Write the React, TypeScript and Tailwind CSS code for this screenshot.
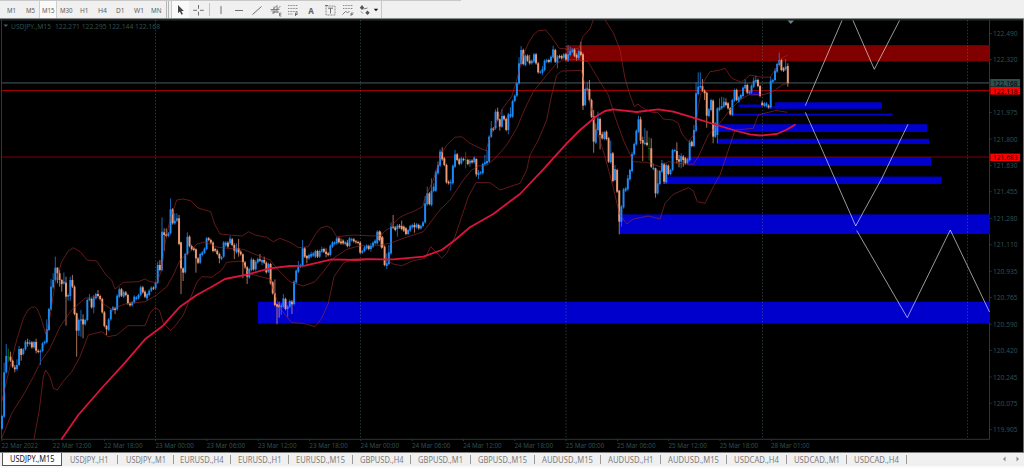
import { Fragment, type ReactNode } from "react";
import clsx from "clsx";

type Bar = [open: number, close: number, high?: number, low?: number];

// Every run of bars starts at its own origin. Values are thirds of a pixel, growing downwards.
type Run = { x: number; y: number; bars: Bar[] };

const STEP = 6.4;

const runs: Run[] = [
  {
    x: 6,
    y: 540,
    bars: [
      [746, 708], [710, 577, 548], [577, 528, 492], [530, 530, 506, 546], [530, 542, 515], [542, 560],
      [562, 568, 555, 577], [567, 555, 538, 572], [555, 507, 498], [507, 525, 504, 542], [522, 508], [508, 485, 480],
      [487, 491, 476, 500], [492, 487, 480], [487, 502], [502, 486], [486, 512, 476, 520], [512, 516],
      [517, 513, 508, 555], [513, 490], [490, 485], [487, 447, 418], [450, 387], [388, 320, 297],
      [322, 300, 280], [300, 263, 230], [263, 280, 262, 310], [280, 300, 270, 320], [300, 312, 297, 335], [310, 305, 278],
      [308, 350, 290, 437], [350, 345, 340, 362], [348, 300, 290, 362], [300, 320, 285], [320, 402], [400, 452, 398, 530],
      [452, 420, 415, 468], [422, 418, 390, 470], [418, 433, 403, 475], [433, 420], [420, 360], [360, 355, 342],
      [357, 382], [382, 352, 345, 400], [355, 342], [342, 348, 330], [348, 357], [357, 397],
      [397, 438], [438, 448, 435, 465], [450, 418], [418, 390, 385], [390, 382], [385, 390, 380, 402],
      [388, 347], [350, 328, 322], [328, 347], [350, 337, 332], [337, 345], [345, 370],
      [370, 376], [376, 367], [367, 350], [357, 352], [355, 345], [345, 322, 317],
      [322, 337], [335, 350], [355, 342, 338, 362], [345, 332], [332, 323], [323, 326],
      [325, 308], [308, 255, 245], [255, 270, 240], [270, 155, 112], [157, 165, 145, 212], [163, 168, 145],
      [168, 160], [160, 88, 55], [88, 130], [130, 122, 100], [122, 115, 100], [115, 192, 105],
    ],
  },
  {
    x: 543,
    y: 540,
    bars: [
      [187, 265, 185, 342], [265, 278, 262, 303], [277, 222], [222, 170, 157], [170, 198], [198, 208], [205, 210],
      [208, 235, 205, 278], [235, 248], [248, 222], [225, 217], [218, 206], [207, 175], [175, 180], [180, 188],
      [188, 213], [207, 212], [212, 222], [222, 235, 218, 250], [237, 232], [230, 187], [196, 188], [188, 200],
      [190, 176, 168], [178, 195], [195, 212, 190, 237], [217, 205, 190], [205, 217, 177, 230], [215, 223],
      [223, 247, 220, 295], [247, 262], [262, 290, 258, 312], [292, 267], [270, 238, 232], [240, 268], [268, 245],
      [247, 237], [238, 242, 222], [247, 240, 238, 255], [240, 248, 230], [248, 277], [275, 252], [252, 310],
      [307, 340], [340, 375, 298], [373, 380, 370, 433], [374, 382, 365, 413], [382, 377, 370, 405], [380, 355, 342],
      [357, 387], [387, 380, 375, 410], [380, 363], [365, 373, 360, 402], [372, 305], [307, 272], [275, 260, 243],
      [260, 255], [258, 205, 180], [205, 230], [228, 235, 225, 250], [235, 225], [230, 222, 215], [227, 220],
      [230, 213], [213, 230], [230, 213], [215, 207, 200], [207, 215], [215, 222, 205, 232], [220, 225], [225, 197],
      [200, 187], [192, 187], [190, 175], [175, 187], [185, 190, 175], [182, 190], [192, 187], [188, 198, 180],
      [198, 175], [181, 177], [178, 184], [184, 187], [186, 189], [188, 218], [218, 213], [213, 202], [205, 197],
      [198, 207], [207, 198, 190, 215], [200, 188], [190, 182], [190, 155], [155, 180], [175, 202],
    ],
  },
  {
    x: 1141,
    y: 60,
    bars: [
      [637, 652], [652, 680], [680, 735], [738, 730, 700, 747], [732, 697, 675], [700, 620, 607], [620, 623, 585],
      [622, 630], [627, 617, 612, 650], [617, 622, 612], [618, 627, 602], [620, 632], [625, 642], [642, 630], [632, 618],
      [622, 615], [615, 622, 608, 638], [622, 613], [615, 625], [625, 618], [618, 607], [607, 550, 528],
      [553, 520, 500], [520, 552], [555, 512, 475], [513, 500, 490], [512, 455], [460, 435, 425], [437, 395, 388],
      [395, 418, 382], [415, 435], [435, 487], [485, 490], [490, 487, 478, 512], [490, 437], [440, 403, 390],
      [403, 420], [418, 432], [430, 415], [417, 420], [419, 419, 395, 445], [420, 432], [430, 422, 417, 440],
      [422, 427], [427, 413], [417, 463, 415, 470], [465, 458, 450, 477], [460, 457], [460, 432], [433, 427, 405],
      [430, 423, 390], [425, 350], [350, 325, 303], [325, 330], [325, 275, 268], [275, 300, 263], [298, 320, 295, 332],
      [320, 288, 268], [288, 298], [297, 330], [330, 283, 278, 343], [290, 282, 262], [290, 243], [243, 227],
      [227, 190], [190, 130, 112], [132, 90, 78], [90, 132], [135, 107], [107, 122], [122, 130, 105], [130, 122],
      [125, 103], [103, 130], [130, 157], [158, 155], [158, 148, 138, 165], [150, 122], [125, 120], [120, 126],
      [125, 110], [112, 88, 77], [90, 125], [128, 110, 105, 145], [108, 112], [108, 115], [113, 103], [103, 120],
      [122, 103, 75], [105, 93, 80], [95, 88], [88, 107], [105, 113, 100, 122], [115, 93], [95, 105, 65],
      [103, 257, 98, 270], [255, 207], [210, 205, 185], [207, 240, 180], [240, 290],
    ],
  },
  {
    x: 1781,
    y: 60,
    bars: [
      [288, 365, 270, 398], [368, 328, 310], [330, 295, 275], [297, 345, 292, 388], [343, 355, 335], [357, 337], [335, 357],
      [355, 425], [427, 400, 362], [400, 483], [480, 447, 435], [450, 515], [512, 605, 510, 643], [605, 560, 555, 620],
      [562, 508], [512, 505], [508, 475, 465], [478, 450], [453, 402, 395], [403, 372], [373, 332], [335, 298, 287],
      [298, 362, 290, 372], [360, 370, 350, 423], [372, 368, 325], [368, 375, 332], [384, 384, 352, 422], [385, 440, 355],
      [447, 443, 430], [445, 520, 443, 533], [520, 490, 450], [492, 453], [455, 430, 420], [432, 485, 428, 492], [487, 435],
      [437, 462], [462, 450], [450, 390], [393, 390], [393, 420, 367, 430], [418, 425, 405, 442], [425, 408, 400, 445],
      [410, 420, 405, 440], [415, 430], [428, 418], [420, 367, 360], [365, 378], [378, 330, 315], [332, 220, 187],
      [222, 200, 157], [202, 198, 157], [198, 212, 177], [212, 220, 208, 240], [218, 287, 215, 323], [288, 268],
      [270, 240], [242, 350, 238, 370], [350, 310], [345, 265, 262, 370], [270, 262, 235], [265, 258, 230],
      [260, 245, 232], [247, 255, 235], [250, 265], [265, 283], [285, 240], [242, 210], [210, 240], [245, 232],
      [235, 225], [228, 203], [205, 195, 178], [195, 218], [220, 215], [217, 197], [200, 182, 172], [185, 180, 167],
      [180, 198], [198, 228], [248, 255, 243], [258, 250], [258, 250], [257, 262], [262, 182, 170], [185, 180],
      [180, 152, 145], [155, 132], [135, 120, 98], [120, 150], [145, 152], [148, 140, 117], [138, 190, 130, 200],
    ],
  },
];

const upperBand =
  "1.7,401.7 10,366.7 16.7,340 23.3,318.3 28,310 31.7,307.3 34.5,307 37.3,309 40.7,317 45.7,334 50,316.7 55,283.3 61.7,261.7 68.3,251 73.3,247.7 80,251.7 87.3,260 96.7,261 106,275 111.7,280 115,289 123.3,282.3 138.3,281.7 145,279 150,281.7 156.7,282.7 161.7,270 165,243.3 170,220 176.7,200 183,199 190.7,200.7 198,208 210.7,211.7 215,225 220,234 230,235 242.3,236 248.3,231.7 255,235 266.7,237.3 273.3,241.7 280,238.3 290,242.3 298.3,247.7 308.3,246.7 315,235 320,228.3 326.7,226 331.7,228.3 336.7,236.7 353.3,235 373.3,236 381.7,235 385,230.7 390,228 395,222 400,217.3 406.7,214 415,210.7 422.7,206.7 425,198 433.3,180 441.7,153.3 446.7,145 455,137.3 461.7,136.7 470,143.3 476.7,146.7 486,150.7 490,136.7 496.7,121.7 503.3,107.3 511.7,96.7 516.7,80 523.3,55 528.3,43.3 533.3,35 538.3,30.7 545.7,30 551.7,37.3 559.3,48.3 571.7,49.3 579,48.3 582.7,36.7 590,29 593.3,20";
const upperBandTail =
  "605,20 613.3,32.7 620,50 625,78.3 630,95 634.3,106.7 638,104 641.7,107.3 651.7,112.3 658,112.7 663.3,119 673,120 678.3,123.3 681.7,133.3 688.3,141.7 695,133.3 698.3,106.7 702.7,83.3 710,71.7 718,70.5 725,68.3 731.7,78.3 741.7,82.3 750,75 760,77 770,77.3 775,70 781.7,58.3 787.7,55";
const middleBand =
  "1.7,438.3 11.7,413.3 23.3,395 33.3,376.7 40.7,361.7 50,348.3 60,326.7 71.7,310 85,298.3 96.7,296 103.3,304 111.7,309.3 125,304 145,301.7 156.7,295 166.7,286.7 173.3,275 180,260 190,251.7 197,244 205,242 217,247 226.7,248.3 243.3,249.3 256.7,255 270,260 278.3,270 290,281.7 303.3,286 315,281.7 323.3,271.7 333.3,258.3 346.7,249.3 360,245.7 376.7,245.7 390,243.3 403.3,238.3 423.3,231.7 440,210 450,200 463.3,180 471.7,170 478.3,166 486.7,165.7 496.7,156.7 506.7,145 516.7,128.3 525,108.3 533.3,91.7 546.7,75 556.7,63.3 563.3,60 576.7,59.3 588,61.7 600,81.7 608.3,95 615,116.7 623.3,140 633.3,161.7 646.7,162.3 660,166.7 668.3,161.7 683.3,164 693.3,164.3 698.3,156.7 708.3,135 718.3,125 730,110 740,100 750,94 761.7,95 773.3,91.7 781.7,85 788,83.3";
const lowerBand =
  "34,439 39.3,410 43.3,376.7 45.7,370 50,376.7 53.3,388.3 57.3,390 63,381.7 71.7,371.7 80,356.7 88.3,335 101.7,331.7 108,336.7 116.7,335 128,325.7 145,325.7 150,313 155,307.7 159.3,310 163.3,323 170.7,330.7 176.7,324 183.3,315 191.7,295 197,282 201.7,276.7 211.7,277.3 221.7,270 226.7,262.3 241.7,261 248.3,273.3 258,276 270,279 273.3,290 280,308.3 291.7,322.7 303,323.3 315,326.7 321.7,318.3 328.3,303.3 334,276.7 343.3,263.3 353,259 370,258.3 387,260 393,264 401.7,265.7 413.3,260.7 425,258.3 430.7,246.7 435,250.7 441.7,258.3 446.7,253.3 455,236.7 461.7,216.7 468.3,196.7 476,182.7 490,182.7 500,190 520,183.3 526.7,170 530,155 538.3,140 546.7,120 551.7,95 556.7,75 561.7,71 579.3,70.5 581,70 586.7,90 596.7,130 605,156.7 613,186.7 619.3,213.3 626.7,224 633.3,219 648.3,216 660,219 665,203.3 673.3,194.3 688.3,187.7 693.3,190.7 697.3,201.7 705,203.3 713.3,186.7 720,175 726.7,155 735,130 753.3,128.3 758.3,115 766.7,112.7 776,110.5 787.3,112.3";
const movingAverage =
  "61.7,439 78.3,415 100,390 125,362.7 145,339.3 163,325.7 180,306.7 196.7,295 210,287.7 225,279 248,274.3 270,268.3 290,266 305,265.7 331.7,259.3 356.7,260 366.7,259.3 393.3,259.3 423.3,256.7 441.7,250 455,240 470,227.3 493.3,214 520,194 543.3,169.3 566.7,143.3 580,130 596.7,116 605,111 613.3,109.3 636.7,112 658.3,109.3 673.3,111.7 690,116.7 713.3,124 736.7,131 750,134.3 760,135.5 776.7,134 786,130 795,124.7";

const zones = [
  { x: 258, y: 301.7, right: 990, bottom: 323.4 },
  { x: 619.5, y: 214.4, right: 990, bottom: 234 },
  { x: 664, y: 176.6, right: 941.7, bottom: 184 },
  { x: 687, y: 157, right: 931, bottom: 165.8 },
  { x: 717, y: 138.8, right: 929, bottom: 143.9 },
  { x: 715, y: 124.2, right: 927, bottom: 131.9 },
  { x: 732, y: 113.6, right: 892.6, bottom: 115.7 },
  { x: 775, y: 102.3, right: 882, bottom: 108.8 },
  { x: 738.5, y: 104.5, right: 762, bottom: 107 },
  { x: 767, y: 106.3, right: 776, bottom: 108.5 },
  { x: 749.5, y: 91.7, right: 759.5, bottom: 96 },
];

const forecasts = [
  "805.3,105.7 842,20.5",
  "853,20.5 874.3,69.3 899.5,20.5",
  "805.3,112.3 820,145 855.7,226 882,178 908,124.3",
  "856.7,230.5 907.3,317.7 950.3,230 989.5,312",
];

const prices = [
  { y: 33.5, label: "122.490" },
  { y: 59.5, label: "122.320" },
  { y: 112.5, label: "121.975" },
  { y: 139, label: "121.800" },
  { y: 165.5, label: "121.630" },
  { y: 191.7, label: "121.455" },
  { y: 218.5, label: "121.280" },
  { y: 244.7, label: "121.110" },
  { y: 271.3, label: "120.935" },
  { y: 297.5, label: "120.765" },
  { y: 324.2, label: "120.590" },
  { y: 350.5, label: "120.420" },
  { y: 377, label: "120.245" },
  { y: 403.3, label: "120.075" },
  { y: 429.5, label: "119.905" },
];

const priceTags = [
  { y: 82.8, label: "122.168", fill: "#2f4f4f" },
  { y: 90.8, label: "122.118", fill: "#ff0000" },
  { y: 157.4, label: "121.683", fill: "#ff0000" },
];

const times = [
  "22 Mar 2022", "22 Mar 12:00", "22 Mar 18:00", "23 Mar 00:00", "23 Mar 06:00", "23 Mar 12:00", "23 Mar 18:00",
  "24 Mar 00:00", "24 Mar 06:00", "24 Mar 12:00", "24 Mar 18:00", "25 Mar 00:00", "25 Mar 06:00", "25 Mar 12:00",
  "25 Mar 18:00", "28 Mar 01:00",
];

const daySeparators = [155.5, 360.5, 566, 762.5, 967.5];

const timeframes = [
  { label: "M1", width: "w-[19px]", text: 9 },
  { label: "M5", width: "w-[18px]", text: 9 },
  { label: "M15", width: "w-[18px]", text: 12.5 },
  { label: "M30", width: "w-[18px]", text: 12.5 },
  { label: "H1", width: "w-[18px]", text: 8.5 },
  { label: "H4", width: "w-[18px]", text: 9 },
  { label: "D1", width: "w-[19px]", text: 8.5 },
  { label: "W1", width: "w-[18px]", text: 10 },
  { label: "MN", width: "w-[17px]", text: 10.5 },
];

const tabs = [
  { label: "USDJPY.,H1", width: "w-[56px]", text: 38.5 },
  { label: "USDJPY.,M1", width: "w-[56px]", text: 40 },
  { label: "EURUSD.,H4", width: "w-[57px]", text: 43.5 },
  { label: "EURUSD.,H1", width: "w-[58px]", text: 43.5 },
  { label: "EURUSD.,M15", width: "w-[64px]", text: 49 },
  { label: "GBPUSD.,H4", width: "w-[58px]", text: 43.5 },
  { label: "GBPUSD.,M1", width: "w-[60px]", text: 45 },
  { label: "GBPUSD.,M15", width: "w-[64px]", text: 49 },
  { label: "AUDUSD.,M15", width: "w-[66px]", text: 51 },
  { label: "AUDUSD.,H1", width: "w-[60px]", text: 45.5 },
  { label: "AUDUSD.,M15", width: "w-[66px]", text: 51 },
  { label: "USDCAD.,H4", width: "w-[60px]", text: 45 },
  { label: "USDCAD.,M1", width: "w-[60px]", text: 46 },
  { label: "USDCAD.,H4", width: "w-[60px]", text: 45 },
];

function Label({ label, width, size, fill }: { label: string; width: number; size: number; fill: string }) {
  return (
    <svg width={width} height="12" className="block shrink-0 overflow-visible">
      <text x="0" y="8.9" fontSize={size} textLength={width} lengthAdjust="spacingAndGlyphs" fill={fill}>
        {label}
      </text>
    </svg>
  );
}

function Tool({ width, children }: { width: string; children: ReactNode }) {
  return (
    <div className={clsx("flex h-full shrink-0 items-center justify-center", width)}>
      <svg width="14" height="14" viewBox="0 0 14 14" fill="none" stroke="#707070" className="shrink-0">
        {children}
      </svg>
    </div>
  );
}

function Toolbar() {
  return (
    <div className="flex h-[19px] border-t border-b border-t-[#c8c8c8] border-b-[#8b8b8b] bg-[#f0f0f0]">
      <div className="flex h-full w-[382px] shrink-0 items-stretch border-r border-[#c8c8c8] pl-[2px]">
        {timeframes.map((item) => (
          <div
            key={item.label}
            className={clsx(
              "flex shrink-0 items-center justify-center pt-px",
              item.width,
              item.label === "M15" && "border-x border-[#cfcfcf] bg-[#fafafa]",
            )}
          >
            <Label label={item.label} width={item.text} size={7.6} fill="#606060" />
          </div>
        ))}
        <div className="ml-px w-[3px] shrink-0 border-x border-[#b5b5b5]" />
        <div className="ml-[2px] flex w-[18px] shrink-0 items-center border-l border-[#c8c8c8] bg-[#fafafa]">
          <Tool width="w-[17px]">
            <path d="M4 2v8.3l1.9-1.7 1.5 3.1 1.5-.7-1.5-3h2.5z" fill="#454545" stroke="none" />
          </Tool>
        </div>
        <Tool width="w-[18px]">
          <path d="M7.5 2v3.8M7.5 8.7v3.8M2.2 7.3h3.8M9 7.3h3.8" />
        </Tool>
        <div className="my-[2px] ml-[2px] w-px shrink-0 bg-[#c4c4c4]" />
        <Tool width="w-[21px]">
          <path d="M7 3v8" />
        </Tool>
        <Tool width="w-[16px]">
          <path d="M3 7.5h8" />
        </Tool>
        <Tool width="w-[20px]">
          <path d="M2.5 11.5l9-8" />
        </Tool>
        <Tool width="w-[17px]">
          <path d="M2 8.5L8.5 2M3.5 11l8-8M1.5 6.5h9M3 9h7M5 3.5v7M8 3v7" strokeWidth=".8" />
          <path d="M12.5 10h-2v3h2M10.5 11.5h1.6" strokeWidth=".8" />
        </Tool>
        <Tool width="w-[18px]">
          <path d="M2 2.5h10M2 5.5h10M2 8.5h10M2 11h5" strokeWidth=".8" strokeDasharray="1 .6" />
          <path d="M9.5 13v-3h2.5M9.5 11.5h2" />
        </Tool>
        <div className="flex w-[18px] shrink-0 items-center justify-center pt-[2px] text-[8px] font-bold text-[#606060]">
          A
        </div>
        <Tool width="w-[19px]">
          <rect x="3" y="3" width="9" height="9" strokeWidth=".8" strokeDasharray="1 .5" />
          <path d="M5 5.2h5M7.5 5v5.5M2 2.5h3" />
        </Tool>
        <Tool width="w-[17px]">
          <path d="M2 2.5h10M2 5.5h10" strokeWidth=".8" strokeDasharray="1 .6" />
          <path d="M1.5 11.5l3-3 2 1 2-1M10 13v-3h2.5M10 11.5h2" strokeWidth=".9" />
        </Tool>
        <Tool width="w-[17px]">
          <path d="M4 2l2.2 2.8L4 7 1.8 4.8zM9.5 7.5l2.2 2.3L9.5 12 7.3 9.8z" fill="#555" stroke="none" />
          <path d="M3 8.5l2 2M5.5 6l4-1" strokeWidth=".9" />
        </Tool>
        <Tool width="w-[5px]">
          <path d="M4.8 5.7h4.4L7 8.2z" fill="#111" stroke="none" />
        </Tool>
      </div>
      <div className="w-[79px] shrink-0" />
      <div className="-mt-px h-px grow bg-[#f0f0f0]" />
    </div>
  );
}

function Candles() {
  return (
    <g>
      {runs.map((run) =>
        run.bars.map(([open, close, high, low], i) => {
          const x = (run.x + i * STEP) / 3;
          const top = Math.min(open, close);
          const bottom = Math.max(open, close);
          const fill = open === close ? "#008a00" : close < open ? "#1e90ff" : "#f4a07a";
          const wickTop = (run.y + (high ?? top - 4)) / 3;
          const wickBottom = (run.y + (low ?? bottom + 4)) / 3;
          return (
            <Fragment key={`${run.x}-${i}`}>
              <rect x={x - 0.5} y={wickTop} width="1" height={wickBottom - wickTop} fill={fill} opacity=".7" />
              <rect
                x={x - 0.98}
                y={(run.y + top) / 3}
                width="1.96"
                height={Math.max((bottom - top) / 3, 0.7)}
                fill={fill}
                opacity=".93"
              />
            </Fragment>
          );
        }),
      )}
    </g>
  );
}

function Chart() {
  return (
    <svg width="1024" height="433" viewBox="0 19 1024 433" className="block shrink-0 bg-black">
      <path d="M0 19.7h1024" stroke="#1d2c2d" strokeWidth="1.4" />
      <path d="M1.5 20v419.3H989.5V20" fill="none" stroke="#263a3a" />
      <path d="M1023.5 19v433" stroke="#6a6a6a" />

      <path d="M2 82.8H989.5" stroke="#2b3337" strokeWidth="1.7" />

      <rect x="565.7" y="45.2" width="424" height="16.2" fill="#800000" />
      {zones.map((zone) => (
        <rect
          key={`${zone.x}-${zone.y}`}
          x={zone.x}
          y={zone.y}
          width={zone.right - zone.x}
          height={zone.bottom - zone.y}
          fill="#0000cd"
        />
      ))}
      <path d="M2 90.5H989.5" stroke="#9c0000" />
      <path d="M2 157H989.5" stroke="#800000" />

      {daySeparators.map((x) => (
        <path key={x} d={`M${x} 20v419`} stroke="#5a8080" strokeOpacity=".5" strokeWidth=".8" strokeDasharray="1.6 1.6" />
      ))}

      <Candles />

      <g fill="none" stroke="#a52a2a" strokeOpacity=".7" strokeWidth=".85" strokeLinejoin="round">
        <polyline points={upperBand} />
        <polyline points={upperBandTail} />
        <polyline points={middleBand} />
        <polyline points={lowerBand} />
      </g>
      <polyline
        points={movingAverage}
        fill="none"
        stroke="#dc143c"
        strokeWidth="1.8"
        strokeLinejoin="round"
        strokeLinecap="round"
      />

      {forecasts.map((points) => (
        <polyline key={points} points={points} fill="none" stroke="#ffffff" strokeOpacity=".75" strokeWidth=".8" />
      ))}

      <path d="M787.5 20.5h6.5l-3.2 3.5z" fill="#708090" />
      <path d="M3.5 24.5h4.6l-2.3 2.6z" fill="#3d6666" />

      <g fontSize="7.6" fill="#2f4f4f">
        <text x="11" y="28.5" textLength="40" lengthAdjust="spacingAndGlyphs">
          USDJPY.,M15
        </text>
        <text x="55" y="28.5" textLength="105" lengthAdjust="spacingAndGlyphs">
          122.271 122.295 122.144 122.168
        </text>
        {times.map((time, i) => {
          const x = 1.5 + i * 51.3;
          return (
            <Fragment key={time}>
              <path d={`M${x + 0.3} 439v2`} stroke="#263a3a" />
              <text x={x} y="448" textLength={i ? 38.5 : 36.5} lengthAdjust="spacingAndGlyphs">
                {time}
              </text>
            </Fragment>
          );
        })}
        {prices.map((price) => (
          <Fragment key={price.label}>
            <path d={`M990 ${price.y}h1.5`} stroke="#263a3a" />
            <text x="993" y={price.y + 2.6} textLength="24.5" lengthAdjust="spacingAndGlyphs">
              {price.label}
            </text>
          </Fragment>
        ))}
        {priceTags.map((tag) => (
          <Fragment key={tag.label}>
            <rect x="990.3" y={tag.y - 3.8} width="29.8" height="7.6" fill={tag.fill} />
            <text x="993" y={tag.y + 2.7} textLength="24.5" lengthAdjust="spacingAndGlyphs" fill="#000000">
              {tag.label}
            </text>
          </Fragment>
        ))}
      </g>
    </svg>
  );
}

function TabBar() {
  return (
    <div className="flex h-4 items-start border-t border-[#808080] bg-[#f0f0f0] pl-[2px] shadow-[inset_0_-2px_#fafafa]">
      <div className="flex h-[13px] w-[60px] shrink-0 items-center justify-center border border-t-0 border-[#555] bg-white">
        <Label label="USDJPY.,M15" width={44.5} size={8.6} fill="#111111" />
      </div>
      {tabs.map((tab, i) => (
        <div key={i} className={clsx("flex h-[13px] shrink-0 items-center", tab.width)}>
          <div className="flex grow justify-center">
            <Label label={tab.label} width={tab.text} size={8.6} fill="#7c7c7c" />
          </div>
          <div className="h-[9px] w-px bg-[#9a9a9a]" />
        </div>
      ))}
      <svg width="20" height="12" viewBox="0 0 20 12" className="mr-[3px] ml-auto" fill="#8a8a8a">
        <path d="M4.5 3.5v5L2 6zM15.5 3.5v5L18 6z" />
      </svg>
    </div>
  );
}

export default function App() {
  return (
    <div className="flex h-[468px] w-[1024px] flex-col overflow-hidden bg-[#f0f0f0] font-['Noto_Sans','Open_Sans',sans-serif] leading-none">
      <Toolbar />
      <Chart />
      <TabBar />
    </div>
  );
}
